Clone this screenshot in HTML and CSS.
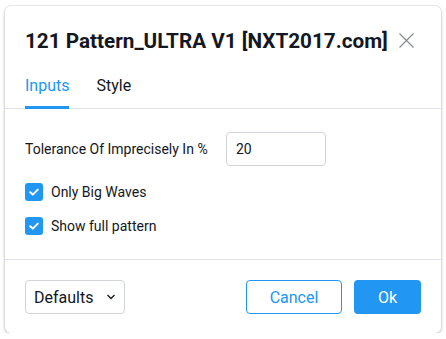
FILE: index.html
```html
<!DOCTYPE html>
<html>
<head>
<meta charset="utf-8">
<link rel="stylesheet" href="styles.css">
</head>
<body>
<div class="dialog">
  <div class="header">
    <div class="title">121 Pattern_ULTRA V1 [NXT2017.com]</div>
    <svg class="close" width="15" height="15" viewBox="0 0 15 15"><path d="M0.5 0.5 L14.5 14.5 M14.5 0.5 L0.5 14.5" stroke="#8a8d96" stroke-width="1.3" fill="none"/></svg>
  </div>
  <div class="tabs">
    <div class="tab active">Inputs</div>
    <div class="tab">Style</div>
  </div>
  <div class="content">
    <div class="field">
      <label class="field-label">Tolerance Of Imprecisely In %</label>
      <div class="input">20</div>
    </div>
    <div class="check-row first">
      <span class="checkbox"><svg width="18" height="18" viewBox="0 0 18 18"><path d="M5.2 9.2 L7.8 11.6 L12.8 6.6" stroke="#fff" stroke-width="2" fill="none" stroke-linecap="round" stroke-linejoin="round"/></svg></span>
      <span class="check-label">Only Big Waves</span>
    </div>
    <div class="check-row">
      <span class="checkbox"><svg width="18" height="18" viewBox="0 0 18 18"><path d="M5.2 9.2 L7.8 11.6 L12.8 6.6" stroke="#fff" stroke-width="2" fill="none" stroke-linecap="round" stroke-linejoin="round"/></svg></span>
      <span class="check-label">Show full pattern</span>
    </div>
  </div>
  <div class="footer">
    <div class="select">
      <span>Defaults</span>
      <svg width="10" height="6" viewBox="0 0 10 6"><path d="M1.5 1 L5 4.5 L8.5 1" stroke="#131722" stroke-width="1.3" fill="none"/></svg>
    </div>
    <div class="actions">
      <div class="btn btn-outline">Cancel</div>
      <div class="btn btn-primary">Ok</div>
    </div>
  </div>
</div>
</body>
</html>
```
FILE: styles.css
```css
* { box-sizing: border-box; }
body {
  margin: 0;
  background: #ffffff;
  font-family: Roboto, "Liberation Sans", sans-serif;
  color: #131722;
}
.dialog {
  margin: 6px 0 0 5px;
  width: 436px;
  background: #fff;
  border-radius: 6px;
  box-shadow: 0 0 0 1px rgba(0,0,0,0.07), 0 2px 4px rgba(0,0,0,0.18);
}
.header {
  display: flex;
  align-items: center;
  justify-content: space-between;
  padding: 20px 27px 0 20px;
}
.title {
  font-size: 20.7px;
  font-weight: 700;
  line-height: 30px;
  color: #131722;
}
.close { display: block; margin-top: -1px; }
.tabs {
  display: flex;
  gap: 27px;
  margin-top: 8px;
  padding: 0 20px;
  border-bottom: 1px solid #e0e3eb;
}
.tab {
  position: relative;
  height: 44px;
  line-height: 44px;
  font-size: 16px;
  color: #131722;
}
.tab.active { color: #2196f3; }
.tab.active::after {
  content: "";
  position: absolute;
  left: 0;
  right: 0;
  bottom: -1px;
  height: 3px;
  background: #2196f3;
}
.content {
  padding: 23px 20px 24px;
  display: flex;
  flex-direction: column;
}
.field {
  display: grid;
  grid-template-columns: 201px 100px;
  align-items: center;
}
.field-label { font-size: 14px; }
.input {
  height: 34px;
  border: 1px solid #d1d4dc;
  border-radius: 4px;
  padding-left: 9px;
  font-size: 14px;
  line-height: 32px;
}
.check-row {
  display: flex;
  align-items: center;
  gap: 8px;
  height: 18px;
  margin-top: 16px;
}
.check-row.first { margin-top: 17px; }
.checkbox {
  width: 18px;
  height: 18px;
  border-radius: 3px;
  background: #2196f3;
  display: block;
}
.checkbox svg { display: block; }
.check-label { font-size: 14px; }
.footer {
  border-top: 1px solid #e0e3eb;
  padding: 20px 20px 19px;
  display: flex;
  justify-content: space-between;
  align-items: center;
}
.select {
  width: 100px;
  height: 34px;
  border: 1px solid #d1d4dc;
  border-radius: 4px;
  padding: 0 8px 0 8px;
  display: flex;
  align-items: center;
  justify-content: space-between;
  font-size: 16px;
}
.select svg { display: block; }
.actions { display: flex; gap: 12px; }
.btn {
  height: 34px;
  border-radius: 4px;
  font-size: 16px;
  display: flex;
  align-items: center;
  justify-content: center;
}
.btn-outline {
  width: 96px;
  border: 1px solid #2196f3;
  color: #2196f3;
}
.btn-primary {
  width: 67px;
  background: #2196f3;
  color: #fff;
}
```
